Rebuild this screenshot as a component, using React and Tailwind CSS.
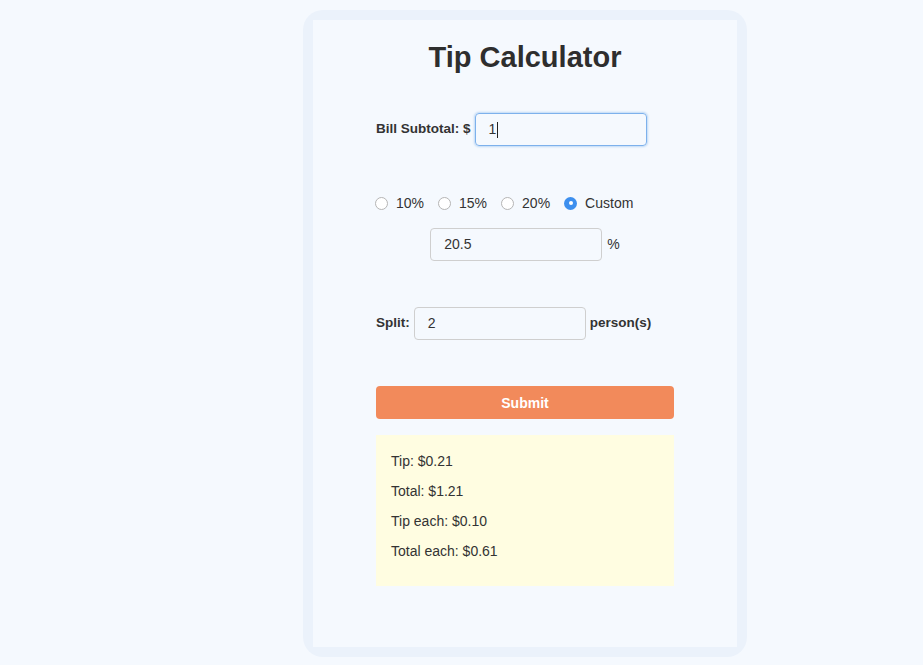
import React from 'react';

const Radio = ({ label, checked }) => (
  <label className="flex items-center gap-2">
    {checked ? (
      <span className="w-[13px] h-[13px] rounded-full bg-[#3d8fee] flex items-center justify-center">
        <span className="w-[4px] h-[4px] rounded-full bg-white" />
      </span>
    ) : (
      <span className="w-[13px] h-[13px] rounded-full border border-[#b5b5b5] bg-white" />
    )}
    <span>{label}</span>
  </label>
);

const Field = ({ value, width = 'w-[172px]', focused }) => (
  <div
    className={`relative h-[33px] ${width} rounded-[4px] border flex items-center pl-[13px] ${
      focused
        ? 'border-[#7db1ec] shadow-[0_0_2px_1px_rgba(125,177,236,0.45)]'
        : 'border-[#cfcfcf]'
    }`}
  >
    <span>{value}</span>
    {focused && <span className="ml-[1px] w-px h-[16px] bg-[#222]" />}
  </div>
);

const App = () => {
  return (
    <div
      className="min-h-[665px] bg-[#f5f9fe] pt-[10px] text-[14px] text-[#333]"
      style={{ fontFamily: '"Liberation Sans", Arial, sans-serif' }}
    >
      <div className="ml-[303px] w-[444px] h-[647px] rounded-[20px] bg-[#ebf2fb] p-[10px]">
        <div className="h-full bg-[#f5f9fe] pt-[19px]">
          <div className="w-[298px] mx-auto">
            <h1 className="text-center text-[29px] leading-[36px] font-bold text-[#2e2e2e]">
              Tip Calculator
            </h1>

            <div className="mt-[38px] flex items-center gap-[4px]">
              <span className="font-bold text-[13.5px]">Bill Subtotal: $</span>
              <Field value="1" focused />
            </div>

            <div className="mt-[47px] h-[20px] flex items-center gap-[14px] -ml-px">
              <Radio label="10%" />
              <Radio label="15%" />
              <Radio label="20%" />
              <Radio label="Custom" checked />
            </div>

            <div className="mt-[15px] flex items-center justify-center gap-[5px]">
              <Field value="20.5" />
              <span>%</span>
            </div>

            <div className="mt-[46px] flex items-center gap-[4px]">
              <span className="font-bold text-[13.5px]">Split:</span>
              <Field value="2" />
              <span className="font-bold text-[13.5px]">person(s)</span>
            </div>

            <button className="mt-[46px] w-full h-[33px] rounded-[4px] bg-[#f28a5b] text-white font-bold pt-px">
              Submit
            </button>

            <div className="mt-[16px] bg-[#fffde1] px-[15px] pt-[16px] h-[151px]">
              <p className="leading-[20px] mb-[10px]">Tip: $0.21</p>
              <p className="leading-[20px] mb-[10px]">Total: $1.21</p>
              <p className="leading-[20px] mb-[10px]">Tip each: $0.10</p>
              <p className="leading-[20px] mb-[10px]">Total each: $0.61</p>
            </div>
          </div>
        </div>
      </div>
    </div>
  );
};

export default App;
